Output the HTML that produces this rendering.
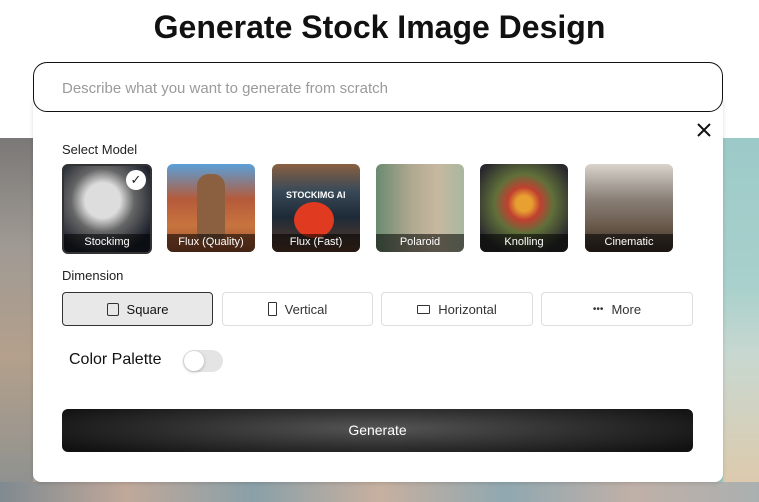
<!DOCTYPE html>
<html><head><style>
body{margin:0;width:759px;height:502px;position:relative;overflow:hidden;font-family:"Liberation Sans",sans-serif;background:#fff}
.bg{position:absolute;left:0;top:138px;width:759px;height:364px;background:linear-gradient(90deg,#8a8a88 0%,#b0a49a 3%,#c9b9a8 50%,#9ccac6 96%,#b8c8c0 100%)}
.bgl{position:absolute;left:0;top:138px;width:33px;height:364px;background:linear-gradient(180deg,#7a7876 0%,#a09a94 30%,#b4a08c 60%,#8a9090 100%)}
.bgr{position:absolute;left:723px;top:138px;width:36px;height:364px;background:linear-gradient(180deg,#9ccac8 0%,#a8d0cc 40%,#c8d8d0 60%,#e0c8a8 100%)}
.bgb{position:absolute;left:0;top:482px;width:759px;height:20px;background:linear-gradient(90deg,#7f8a90,#c0a89a,#8aa0a8,#c7b0a0,#90a8b0,#c0b0a8,#aab0b0)}
h1{position:absolute;top:9px;left:0;width:759px;text-align:center;margin:0;font-size:32px;font-weight:bold;color:#111}
.input{position:absolute;left:33px;top:62px;width:688px;height:48px;border:1px solid #111;border-radius:14px;background:#fff;z-index:2}
.input span{position:absolute;left:28px;top:17px;font-size:15px;color:#9a9a9a}
.panel{position:absolute;left:33px;top:100px;width:690px;height:382px;background:#fff;border-radius:0 0 8px 8px;box-shadow:0 1px 4px rgba(0,0,0,.15)}
.lbl{position:absolute;font-size:13px;color:#222}
.th{position:absolute;top:164px;width:88px;height:88px;border-radius:6px;overflow:hidden}
.th span{position:absolute;bottom:0;left:0;right:0;height:18px;background:rgba(0,0,0,.55);color:#fff;font-size:11px;text-align:center;line-height:17px}
.btn{position:absolute;top:292px;width:150px;height:34px;border:1px solid #ddd;border-radius:4px;font-size:13px;color:#333;display:flex;align-items:center;justify-content:center;gap:8px;box-sizing:border-box}
.gen{position:absolute;left:62px;top:409px;width:631px;height:43px;border-radius:6px;background:radial-gradient(ellipse 60% 80% at 50% 45%,#555 0%,#2e2e2e 55%,#111 100%);color:#fff;font-size:14px;text-align:center;line-height:43px}
</style></head><body>
<div class="bg"></div><div class="bgl"></div><div class="bgr"></div><div class="bgb"></div>
<h1>Generate Stock Image Design</h1>
<div class="panel"></div>
<div class="input"><span>Describe what you want to generate from scratch</span></div>
<svg style="position:absolute;left:697px;top:123px" width="14" height="14"><path d="M1 1L13 13M13 1L1 13" stroke="#111" stroke-width="2"/></svg>
<div class="lbl" style="left:62px;top:142px">Select Model</div>
<div class="th" style="left:62px;border:2px solid #333;width:86px;height:86px;background:radial-gradient(circle at 45% 40%,#ddd 0 25%,#666 45%,#1a1f2a 80%)"><div style="position:absolute;right:4px;top:4px;width:20px;height:20px;border-radius:50%;background:#fff;color:#222;font-size:13px;text-align:center;line-height:20px">✓</div><span>Stockimg</span></div>
<div class="th" style="left:167px;background:linear-gradient(180deg,#5aa0d8 0%,#b55a3a 40%,#c8743e 70%,#9a5030 100%)"><div style="position:absolute;left:30px;top:10px;width:28px;height:70px;border-radius:12px;background:#8a6040"></div><span>Flux (Quality)</span></div>
<div class="th" style="left:272px;background:linear-gradient(180deg,#8a6040 0%,#3a4a58 30%,#1e2a38 60%,#5a3a28 100%)"><div style="position:absolute;left:22px;top:38px;width:40px;height:36px;border-radius:50%;background:#e03a20"></div><div style="position:absolute;left:14px;top:26px;color:#fff;font-size:9px;font-weight:bold">STOCKIMG AI</div><span>Flux (Fast)</span></div>
<div class="th" style="left:376px;background:linear-gradient(90deg,#6a8a70 0%,#b0a890 40%,#c8b8a0 70%,#a8b8a0 100%)"><span>Polaroid</span></div>
<div class="th" style="left:480px;background:radial-gradient(circle at 50% 45%,#e8a030 0 12%,#c04030 25%,#60703a 45%,#2a2a2e 80%)"><span>Knolling</span></div>
<div class="th" style="left:585px;background:linear-gradient(180deg,#d8d4cc 0%,#8a8078 40%,#6a5a4c 70%,#3a2e28 100%)"><span>Cinematic</span></div>
<div class="lbl" style="left:62px;top:268px">Dimension</div>
<div class="btn" style="left:62px;width:151px;background:#e8e8e8;border-color:#333;color:#111"><span style="width:10px;height:11px;border:1.3px solid #333;border-radius:2px"></span>Square</div>
<div class="btn" style="left:222px;width:151px"><span style="width:7px;height:12px;border:1.3px solid #333;border-radius:1px"></span>Vertical</div>
<div class="btn" style="left:381px;width:152px"><span style="width:11px;height:7px;border:1.3px solid #333;border-radius:1px"></span>Horizontal</div>
<div class="btn" style="left:541px;width:152px"><span style="font-size:10px;letter-spacing:0px">•••</span>More</div>
<div class="lbl" style="left:69px;top:351px;font-size:16px;color:#111">Color Palette</div>
<div style="position:absolute;left:183px;top:350px;width:40px;height:22px;border-radius:11px;background:#e4e4e4"><div style="position:absolute;left:1px;top:1px;width:20px;height:20px;border-radius:50%;background:#fff;box-shadow:0 1px 3px rgba(0,0,0,.25)"></div></div>
<div class="gen">Generate</div>
</body></html>
